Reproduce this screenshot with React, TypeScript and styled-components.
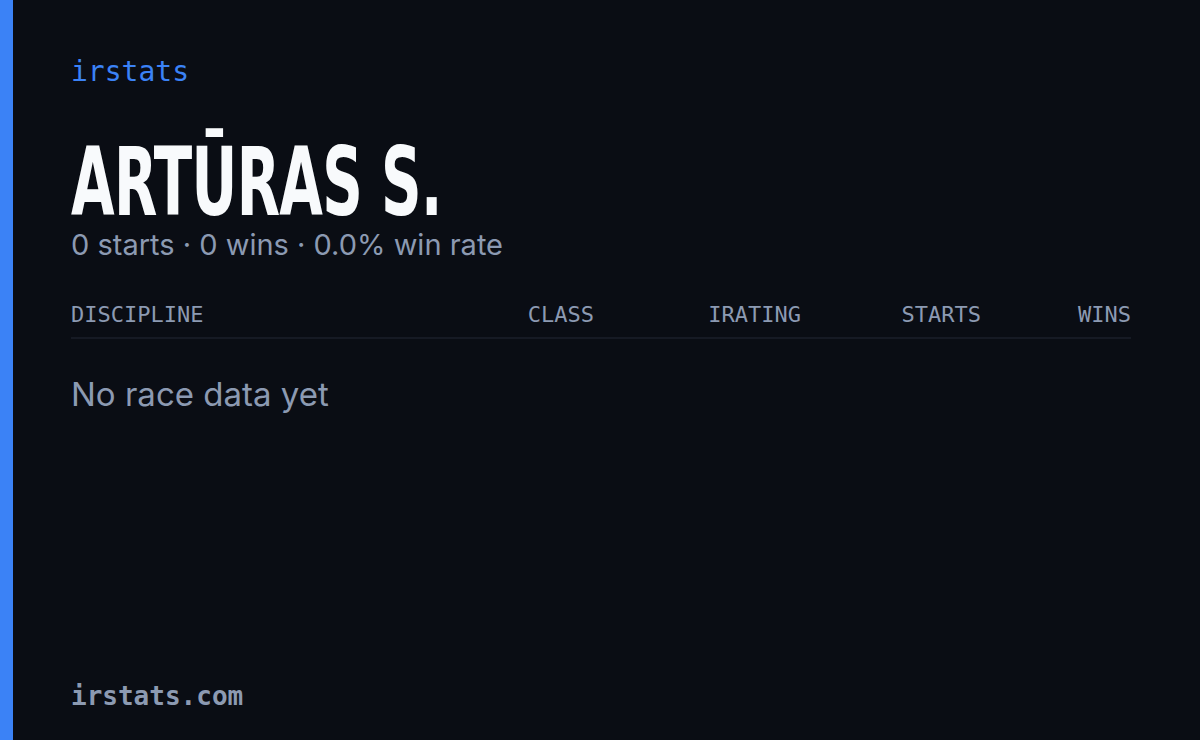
import styled, { createGlobalStyle } from "styled-components";

const GlobalStyle = createGlobalStyle`
  html, body {
    margin: 0;
    padding: 0;
    background: #0a0d14;
  }
`;

const Card = styled.div`
  width: 1200px;
  height: 740px;
  box-sizing: border-box;
  display: flex;
  background: #0a0d14;
  overflow: hidden;
`;

const AccentBar = styled.div`
  width: 13px;
  flex-shrink: 0;
  background: #3b82f6;
`;

const Content = styled.div`
  flex: 1;
  display: flex;
  flex-direction: column;
  padding: 52px 69px 24px 58px;
`;

const Brand = styled.div`
  font-family: "DejaVu Sans Mono", monospace;
  font-size: 28px;
  color: #3b82f6;
  line-height: 40px;
`;

const Name = styled.h1`
  margin: 49px 0 0;
  font-family: "DejaVu Sans Condensed", "DejaVu Sans", sans-serif;
  font-weight: 700;
  font-size: 94px;
  line-height: 84px;
  color: #f8fafc;
  letter-spacing: -1px;
  transform: scaleX(0.666);
  transform-origin: left center;
  white-space: nowrap;
`;

const Summary = styled.div`
  margin-top: 0;
  font-family: Inter, "Noto Sans", sans-serif;
  font-size: 29px;
  line-height: 40px;
  color: #8c9ab2;
`;

const Table = styled.div`
  margin-top: 36px;
  display: grid;
  grid-template-columns: 1fr 130px 207px 180px 150px;
  border-bottom: 2px solid #161a24;
  padding-bottom: 8px;
`;

const HeadCell = styled.div<{ $right?: boolean }>`
  font-family: "DejaVu Sans Mono", monospace;
  font-size: 22px;
  line-height: 28px;
  color: #8c9ab2;
  text-align: ${(p) => (p.$right ? "right" : "left")};
`;

const Empty = styled.div`
  margin-top: 33px;
  font-family: Inter, "Noto Sans", sans-serif;
  font-size: 33px;
  line-height: 44px;
  color: #8c9ab2;
`;

const Footer = styled.div`
  margin-top: auto;
  font-family: "DejaVu Sans Mono", monospace;
  font-weight: 700;
  font-size: 26px;
  line-height: 40px;
  color: #8c9ab2;
`;

const columns = ["Discipline", "Class", "iRating", "Starts", "Wins"];

export default function App() {
  return (
    <Card>
      <GlobalStyle />
      <AccentBar />
      <Content>
        <Brand>irstats</Brand>
        <Name>ARTŪRAS S.</Name>
        <Summary>0 starts · 0 wins · 0.0% win rate</Summary>
        <Table>
          {columns.map((c, i) => (
            <HeadCell key={c} $right={i > 0}>
              {c.toUpperCase()}
            </HeadCell>
          ))}
        </Table>
        <Empty>No race data yet</Empty>
        <Footer>irstats.com</Footer>
      </Content>
    </Card>
  );
}
